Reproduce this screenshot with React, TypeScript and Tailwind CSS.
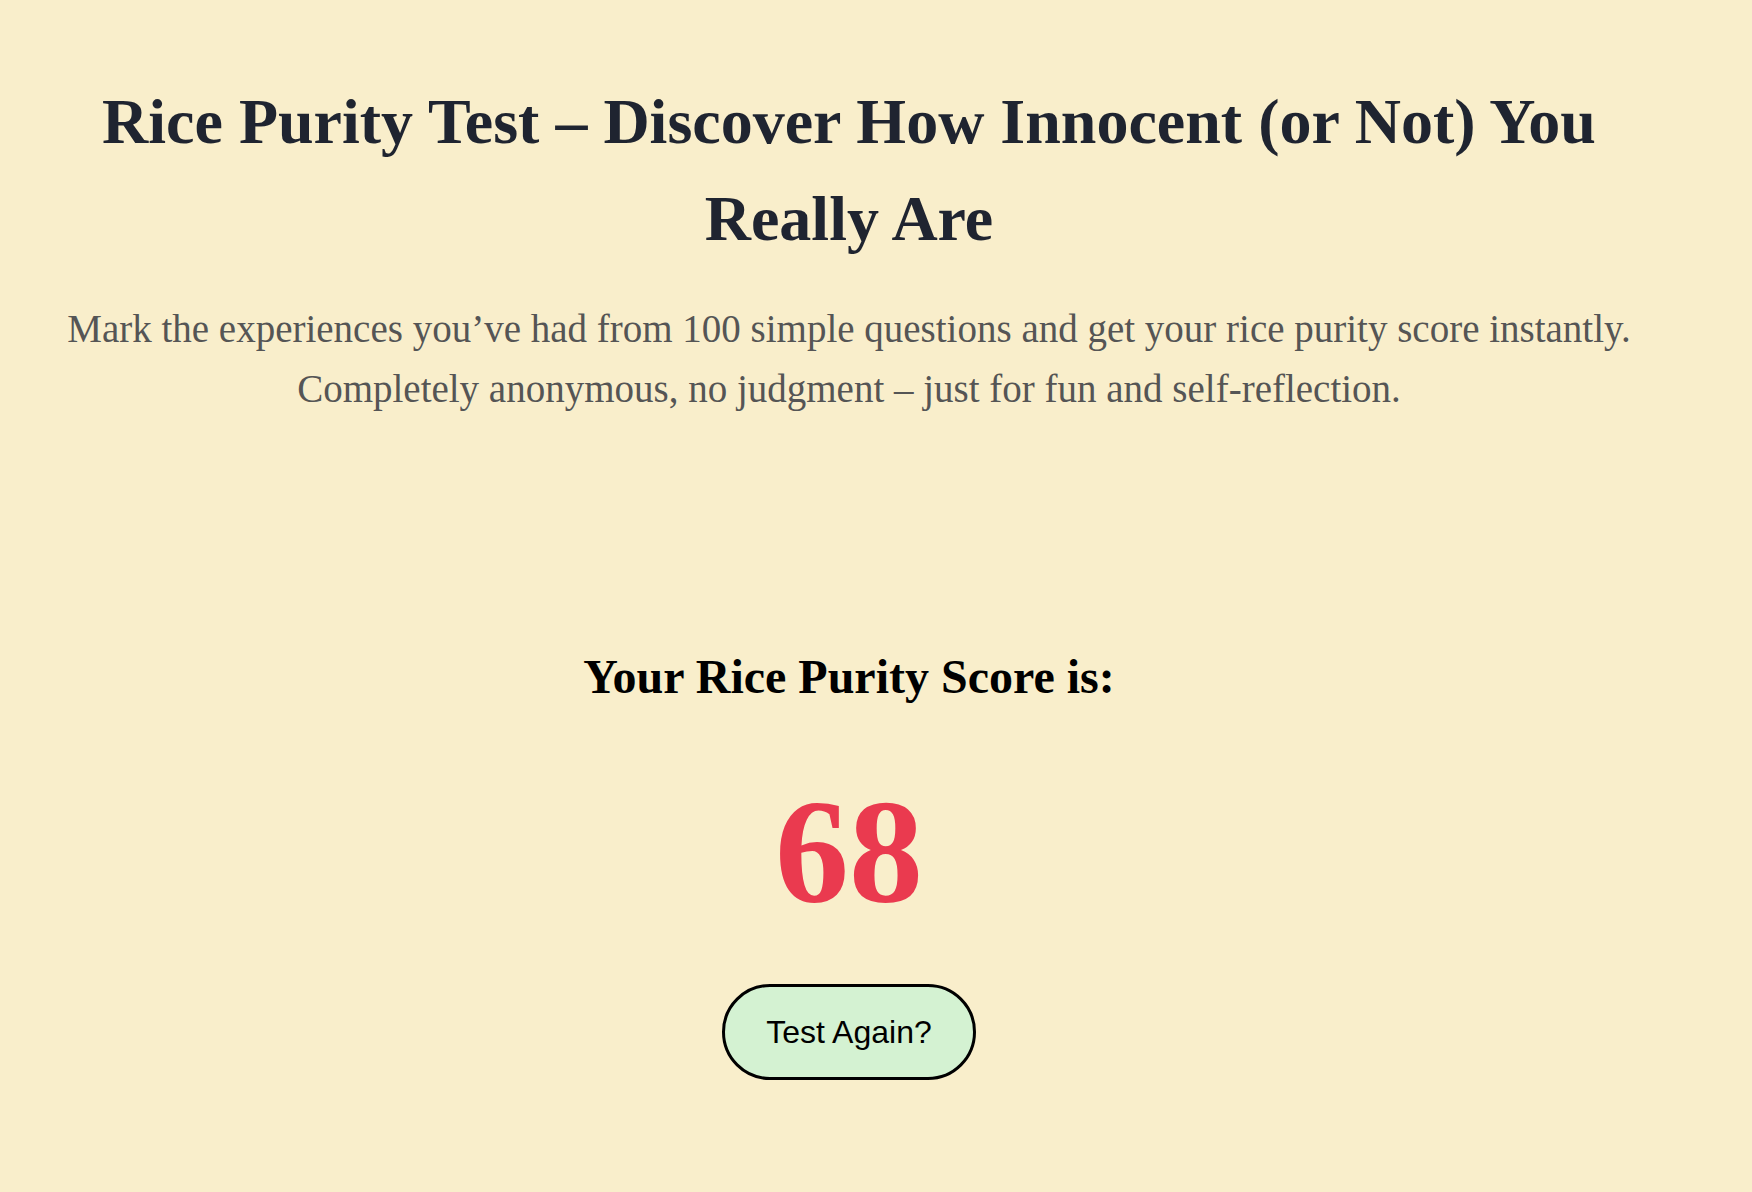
export default function App() {
  return (
    <div className="min-h-screen w-full bg-[#f9eecb]">
      <div className="w-[1698px] flex flex-col items-center text-center">
        <h1 className="mt-[73px] px-[100px] text-[64px] leading-[97px] font-bold text-[#1f2430] font-['Times','Liberation_Serif',serif]">
          Rice Purity Test – Discover How Innocent (or Not) You Really Are
        </h1>
        <p className="mt-[32px] px-[40px] text-[39px] leading-[60px] text-[#555555] font-['Times','Liberation_Serif',serif]">
          Mark the experiences you’ve had from 100 simple questions and get your rice purity score instantly.
          <br />
          Completely anonymous, no judgment – just for fun and self-reflection.
        </p>
        <h2 className="mt-[228px] text-[48px] leading-[60px] font-bold text-black font-['Times','Liberation_Serif',serif]">
          Your Rice Purity Score is:
        </h2>
        <div className="mt-[60px] text-[148px] leading-[170px] font-bold text-[#ea3a4f] font-['Times','Liberation_Serif',serif]">
          68
        </div>
        <button className="mt-[47px] w-[254px] h-[96px] rounded-full border-[3px] border-black bg-[#d4f2d2] text-[32px] text-black font-['Liberation_Sans',Arial,sans-serif]">
          Test Again?
        </button>
      </div>
    </div>
  );
}
